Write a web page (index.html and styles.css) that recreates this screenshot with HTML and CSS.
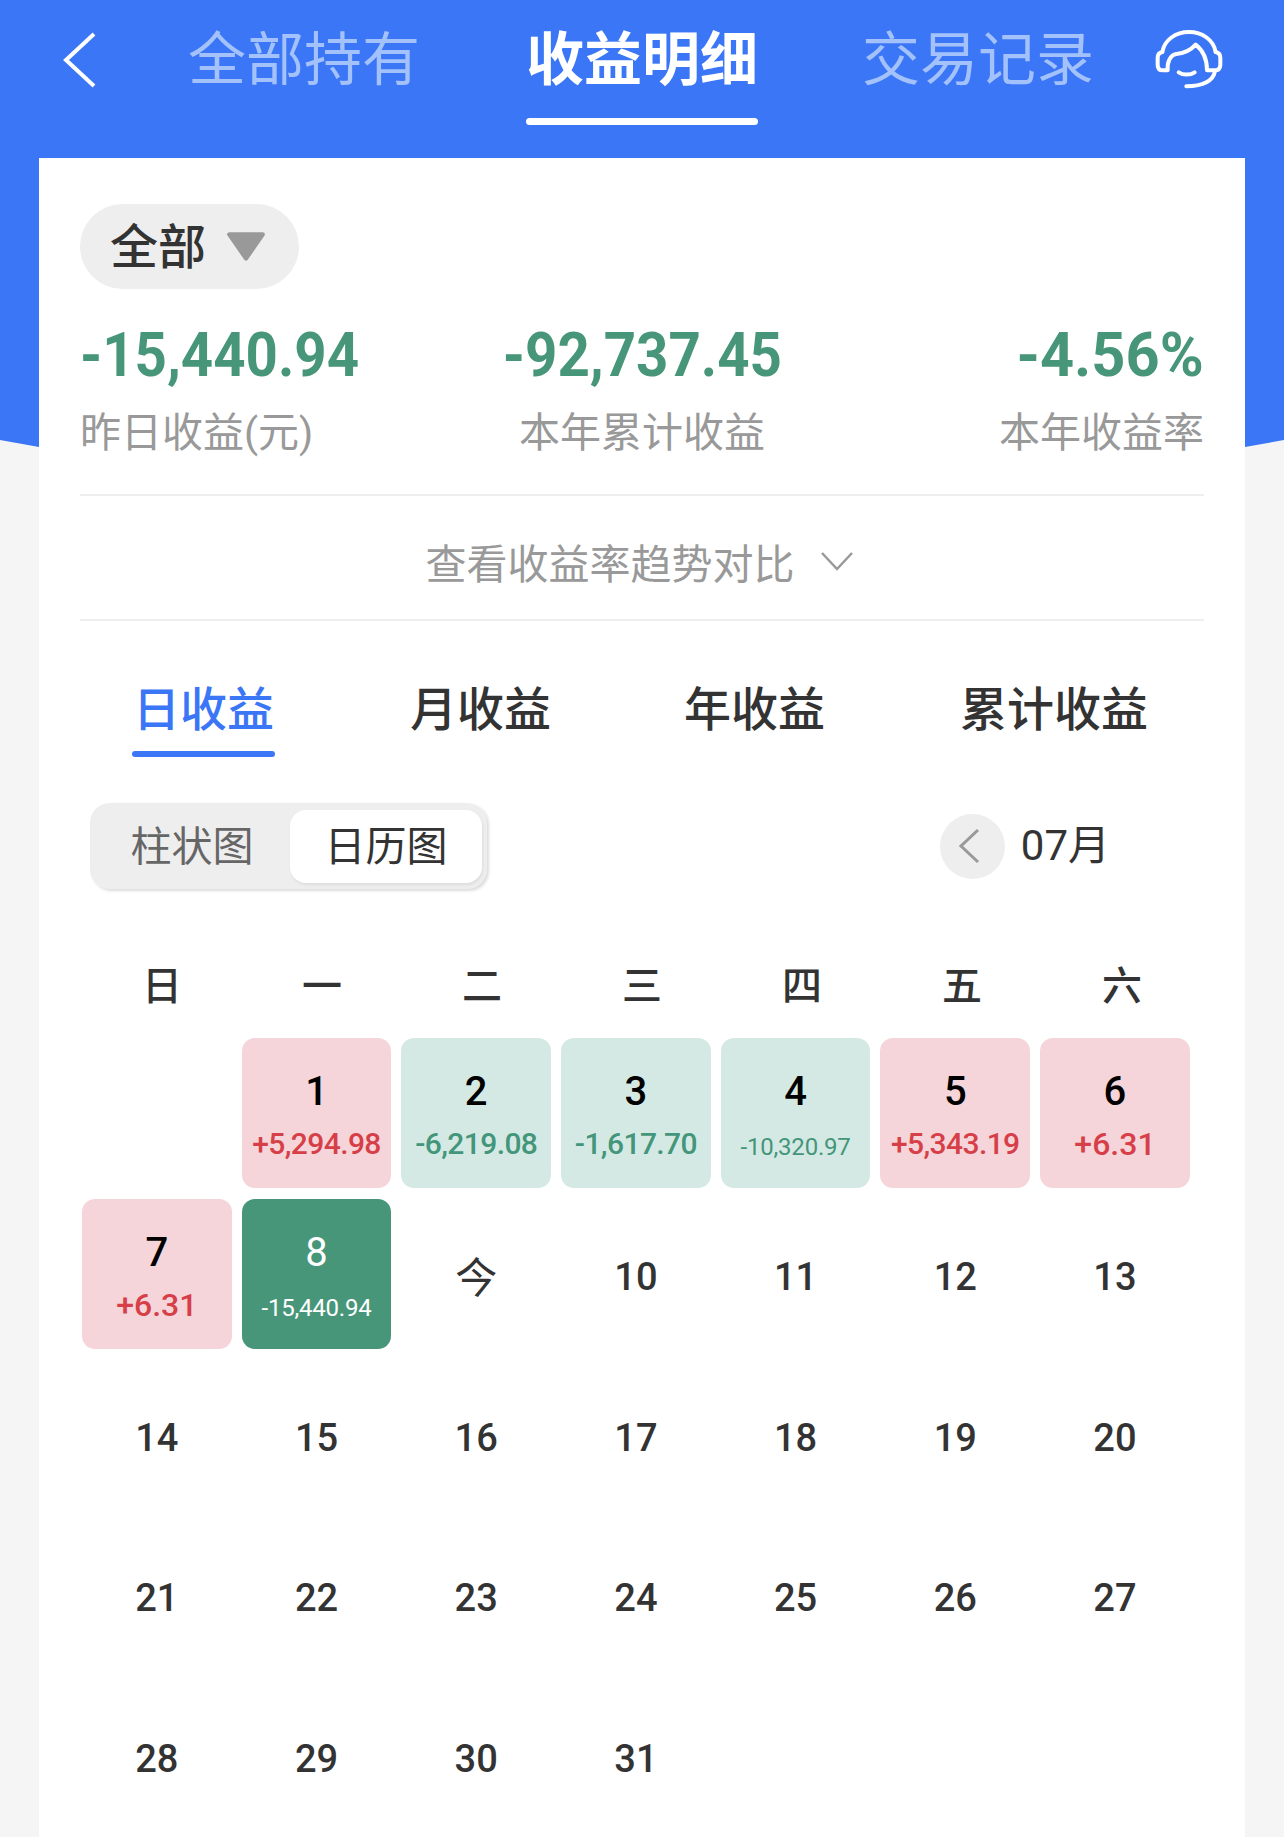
FILE: index.html
```html
<!DOCTYPE html>
<html lang="zh-CN">
   <head>
      <meta charset="UTF-8">
      <meta name="viewport" content="width=device-width, initial-scale=1.0">
      <link rel="stylesheet" href="styles.css">
      <title>收益明细</title>
   </head>
   <body>
      <div class="page">
         <div class="header-bg"></div>
         <div class="topbar">
            <svg class="back" width="34" height="56" viewBox="0 0 34 56"><path d="M32 2 L4 28 L32 54" fill="none" stroke="#fff" stroke-width="4"/></svg>
            <div class="top-tab">全部持有</div>
            <div class="top-tab active">收益明细</div>
            <div class="top-tab">交易记录</div>
            <svg class="service" width="100" height="80" viewBox="0 0 300 240" fill="none" stroke="#fff" stroke-width="12" stroke-linecap="round" stroke-linejoin="round">
               <path d="M70 96 C76 60 110 36 150 36 C190 36 224 60 230 96"/>
               <path d="M70 96 C60 98 56 106 56 114 V134 C56 146 62 151 72 151 H86 C84 128 92 106 112 102 C134 100 154 92 170 74 C188 88 204 112 204 151 H226 C236 151 244 146 244 134 V114 C244 106 240 98 230 96"/>
               <path d="M119 157 C132 166 154 166 167 157"/>
               <path d="M228 154 C222 182 196 198 142 199"/>
            </svg>
         </div>
         <div class="card">
            <div class="filter">
               <span>全部</span>
               <svg width="42" height="31" viewBox="0 0 40 29"><path d="M4 3 H36 L20 26 Z" fill="#999" stroke="#999" stroke-width="4" stroke-linejoin="round"/></svg>
            </div>
            <div class="stats">
               <div class="stat">
                  <div class="stat-num">-15,440.94</div>
                  <div class="stat-label">昨日收益(元)</div>
               </div>
               <div class="stat center">
                  <div class="stat-num">-92,737.45</div>
                  <div class="stat-label">本年累计收益</div>
               </div>
               <div class="stat right">
                  <div class="stat-num">-4.56%</div>
                  <div class="stat-label">本年收益率</div>
               </div>
            </div>
            <div class="trend">
               <span>查看收益率趋势对比</span>
               <svg width="34" height="22" viewBox="0 0 34 22"><path d="M2 3 L17 19 L32 3" fill="none" stroke="#999" stroke-width="2.5"/></svg>
            </div>
            <div class="sub-tabs">
               <div class="sub-tab active">日收益</div>
               <div class="sub-tab">月收益</div>
               <div class="sub-tab">年收益</div>
               <div class="sub-tab">累计收益</div>
            </div>
            <div class="tools">
               <div class="toggle">
                  <div class="toggle-item">柱状图</div>
                  <div class="toggle-item on">日历图</div>
               </div>
               <div class="month">
                  <div class="month-btn"><svg width="22" height="36" viewBox="0 0 22 36"><path d="M20 2 L3 18 L20 34" fill="none" stroke="#999" stroke-width="3"/></svg></div>
                  <span>07月</span>
               </div>
            </div>
            <div class="weekdays">
               <div>日</div><div>一</div><div>二</div><div>三</div><div>四</div><div>五</div><div>六</div>
            </div>
            <div class="days">
               <div></div>
               <div class="day up"><b>1</b><i>+5,294.98</i></div>
               <div class="day down"><b>2</b><i>-6,219.08</i></div>
               <div class="day down"><b>3</b><i>-1,617.70</i></div>
               <div class="day down"><b>4</b><i class="small">-10,320.97</i></div>
               <div class="day up"><b>5</b><i>+5,343.19</i></div>
               <div class="day up"><b>6</b><i class="big">+6.31</i></div>
               <div class="day up"><b>7</b><i class="big">+6.31</i></div>
               <div class="day current"><b>8</b><i class="small">-15,440.94</i></div>
               <div class="plain today">今</div>
               <div class="plain">10</div><div class="plain">11</div><div class="plain">12</div><div class="plain">13</div>
               <div class="plain">14</div><div class="plain">15</div><div class="plain">16</div><div class="plain">17</div><div class="plain">18</div><div class="plain">19</div><div class="plain">20</div>
               <div class="plain">21</div><div class="plain">22</div><div class="plain">23</div><div class="plain">24</div><div class="plain">25</div><div class="plain">26</div><div class="plain">27</div>
               <div class="plain">28</div><div class="plain">29</div><div class="plain">30</div><div class="plain">31</div>
            </div>
         </div>
      </div>
   </body>
</html>
```

FILE: styles.css
```css
* {
box-sizing: border-box;
}
html, body {
margin: 0;
padding: 0;
}
body {
background-color: #f5f5f5;
font-family: Roboto, "Noto Sans CJK SC", sans-serif;
}
.page {
position: relative;
width: 1284px;
height: 1837px;
overflow: hidden;
}
/* blue block behind the card, its lower edge bends down toward the middle */
.header-bg {
position: absolute;
top: 0;
left: 0;
width: 100%;
height: 460px;
background-color: #3b76f6;
clip-path: polygon(0 0, 100% 0, 100% 440px, 1245px 447px, 39px 447px, 0 440px);
}
.topbar {
position: relative;
display: flex;
align-items: center;
height: 158px;
padding: 0 0 0 62px;
}
.back {
margin: -38px 0 0 0;
}
.top-tab {
width: 232px;
margin: -38px 0 0 92px;
font-size: 58px;
line-height: 60px;
text-align: center;
color: #a3c1fa;
white-space: nowrap;
position: relative;
}
.top-tab.active {
margin-left: 106px;
color: #fff;
font-weight: 700;
}
.active + .top-tab {
margin-left: 104px;
}
.top-tab.active::after {
content: "";
position: absolute;
left: 0;
right: 0;
top: 88px;
height: 7px;
border-radius: 4px;
background-color: #fff;
}
.service {
margin: -38px 0 0 45px;
}
.card {
position: relative;
margin: 0 39px;
height: 1679px;
padding: 46px 41px 0;
background-color: #fff;
}
.filter {
display: flex;
align-items: center;
gap: 19px;
width: 219px;
height: 85px;
padding-left: 30px;
border-radius: 43px;
background-color: #eee;
font-size: 48px;
font-weight: 500;
color: #333;
}
.filter span {
padding-bottom: 7px;
}
.stats {
display: grid;
grid-template-columns: 1fr 1fr 1fr;
margin-top: 31px;
padding-bottom: 33px;
border-bottom: 2px solid #eee;
}
.stat-num {
font-size: 62px;
line-height: 70px;
font-weight: 700;
color: #47967a;
white-space: nowrap;
transform: scaleX(0.91);
transform-origin: left;
}
.stat-label {
font-size: 41px;
line-height: 56px;
margin-top: 15px;
color: #999;
white-space: nowrap;
}
.stat.center {
text-align: center;
}
.stat.center .stat-num {
transform-origin: center;
}
.stat.right {
text-align: right;
}
.stat.right .stat-num {
transform: scaleX(0.96);
transform-origin: right;
}
.trend {
display: flex;
align-items: center;
justify-content: center;
gap: 25px;
height: 125px;
padding: 7px 5px 0 0;
border-bottom: 2px solid #eee;
font-size: 41px;
color: #999;
}
.sub-tabs {
display: flex;
margin-top: 54px;
height: 83px;
font-size: 47px;
font-weight: 500;
color: #333;
}
.sub-tab {
position: relative;
width: 143px;
line-height: 70px;
text-align: center;
white-space: nowrap;
}
.sub-tab:nth-child(1) {
margin-left: 52px;
}
.sub-tab:nth-child(2) {
margin-left: 134px;
}
.sub-tab:nth-child(3) {
margin-left: 131px;
}
.sub-tab:nth-child(4) {
margin-left: 133px;
width: 190px;
}
.sub-tab.active {
color: #3b76f6;
}
.sub-tab.active::after {
content: "";
position: absolute;
left: 0;
right: 0;
bottom: 1px;
height: 6px;
border-radius: 3px;
background-color: #3b76f6;
}
.tools {
display: flex;
align-items: center;
justify-content: space-between;
margin-top: 45px;
padding: 0 94px 0 10px;
}
.toggle {
display: flex;
align-items: center;
width: 397px;
height: 86px;
padding: 0 5px 0 0;
border-radius: 20px;
background-color: #eee;
box-shadow: 2px 2px 3px #ddd;
font-size: 41px;
}
.toggle-item {
flex: 1;
height: 73px;
line-height: 73px;
padding: 1px 0 0 4px;
text-align: center;
color: #666;
}
.toggle-item.on {
flex: none;
width: 192px;
padding-left: 0;
border-radius: 16px;
background-color: #fff;
color: #333;
box-shadow: 1px 2px 3px #ddd;
}
.month {
display: flex;
align-items: center;
gap: 16px;
font-size: 42px;
color: #333;
}
.month span {
padding-bottom: 9px;
}
.month-btn {
display: flex;
align-items: center;
justify-content: center;
width: 65px;
height: 65px;
border-radius: 50%;
background-color: #eee;
padding-right: 6px;
}
.weekdays {
display: grid;
grid-template-columns: repeat(7, 160px);
margin-top: 68px;
padding-left: 2px;
height: 60px;
font-size: 40px;
font-weight: 500;
line-height: 60px;
text-align: center;
color: #333;
}
.days {
display: grid;
grid-template-columns: repeat(7, 149.7px);
grid-auto-rows: 150px;
column-gap: 10px;
row-gap: 10.6px;
margin-top: 21px;
margin-left: 2px;
}
.day {
display: flex;
flex-direction: column;
align-items: center;
border-radius: 13px;
white-space: nowrap;
}
.day b {
font-size: 40px;
line-height: 48px;
margin-top: 30px;
font-weight: 500;
color: #000;
}
.day i {
font-style: normal;
font-weight: 500;
font-size: 30px;
letter-spacing: -0.6px;
line-height: 36px;
margin-top: 10px;
}
.day i.big {
font-size: 32px;
letter-spacing: 0;
}
.day i.small {
font-size: 24px;
font-weight: 400;
letter-spacing: -0.2px;
margin-top: 13px;
}
.up {
background-color: #f5d5d9;
}
.up i {
color: #d73f48;
}
.down {
background-color: #d5e9e4;
}
.down i {
color: #43967a;
}
.current {
background-color: #47967a;
}
.day.current b, .day.current i {
color: #fff;
}
.day.current b {
font-weight: 400;
}
.plain {
display: flex;
align-items: center;
justify-content: center;
padding-top: 7px;
font-size: 38px;
font-weight: 500;
color: #333;
}
.today {
padding-top: 1px;
font-weight: 400;
font-size: 42px;
}
```
